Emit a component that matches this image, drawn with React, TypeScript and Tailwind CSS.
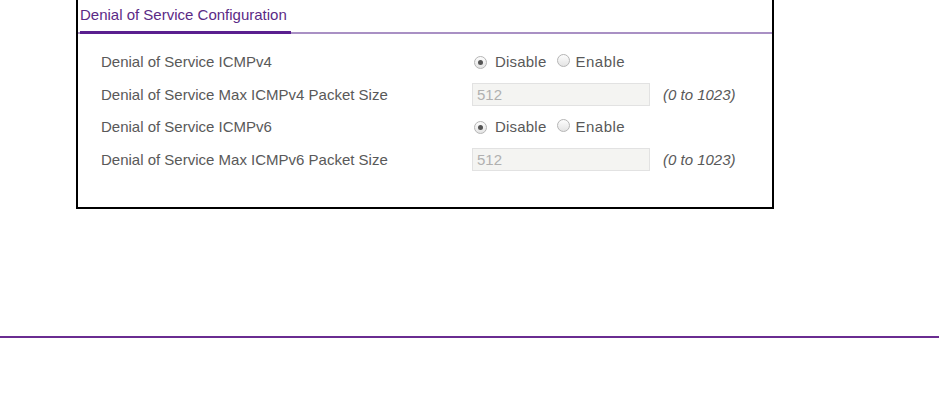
const rows = [
  { kind: "radio", label: "Denial of Service ICMPv4" },
  { kind: "input", label: "Denial of Service Max ICMPv4 Packet Size", value: "512" },
  { kind: "radio", label: "Denial of Service ICMPv6" },
  { kind: "input", label: "Denial of Service Max ICMPv6 Packet Size", value: "512" },
];

function Radio({ checked }: { checked: boolean }) {
  return (
    <span className="inline-flex h-[13px] w-[13px] items-center justify-center rounded-full border border-[#b5b5b5] bg-gradient-to-b from-[#fdfdfd] to-[#e4e4e4]">
      {checked && <span className="h-[5px] w-[5px] rounded-full bg-[#555]" />}
    </span>
  );
}

export default function App() {
  return (
    <div className="h-[406px] w-[939px] bg-white font-['Liberation_Sans',Arial,sans-serif]">
      <div className="ml-[76px] w-[698px] border-x-2 border-b-2 border-black pb-[31px]">
        <div className="relative h-[34px] border-b-2 border-[#a990c4] px-[2px] pt-[3px]">
          <span className="text-[15px] text-[#5b2a86]">Denial of Service Configuration</span>
          <div className="absolute bottom-[-2px] left-[2px] h-[3px] w-[211px] bg-[#5a1f8f]" />
        </div>
        <div className="flex flex-col pt-[12px]">
          {rows.map((r, i) => (
            <div key={i} className="flex h-[32.5px] items-center text-[15px] text-[#595959]">
              <div className="w-[394px] pl-[23px]">{r.label}</div>
              {r.kind === "radio" ? (
                <div className="flex items-center pl-[2px]">
                  <Radio checked />
                  <span className="ml-[8px] tracking-[0.2px]">Disable</span>
                  <span className="ml-[11px]">
                    <Radio checked={false} />
                  </span>
                  <span className="ml-[5px] tracking-[0.5px]">Enable</span>
                </div>
              ) : (
                <div className="flex items-center">
                  <div className="flex h-[23px] w-[178px] items-center border border-[#e2e2e2] bg-[#f4f4f2] pl-[4px] text-[#b0b0b0]">
                    {r.value}
                  </div>
                  <span className="ml-[13px] italic">(0 to 1023)</span>
                </div>
              )}
            </div>
          ))}
        </div>
      </div>
      <div className="mt-[127px] h-[2px] w-full bg-[#6a2c91]" />
    </div>
  );
}
